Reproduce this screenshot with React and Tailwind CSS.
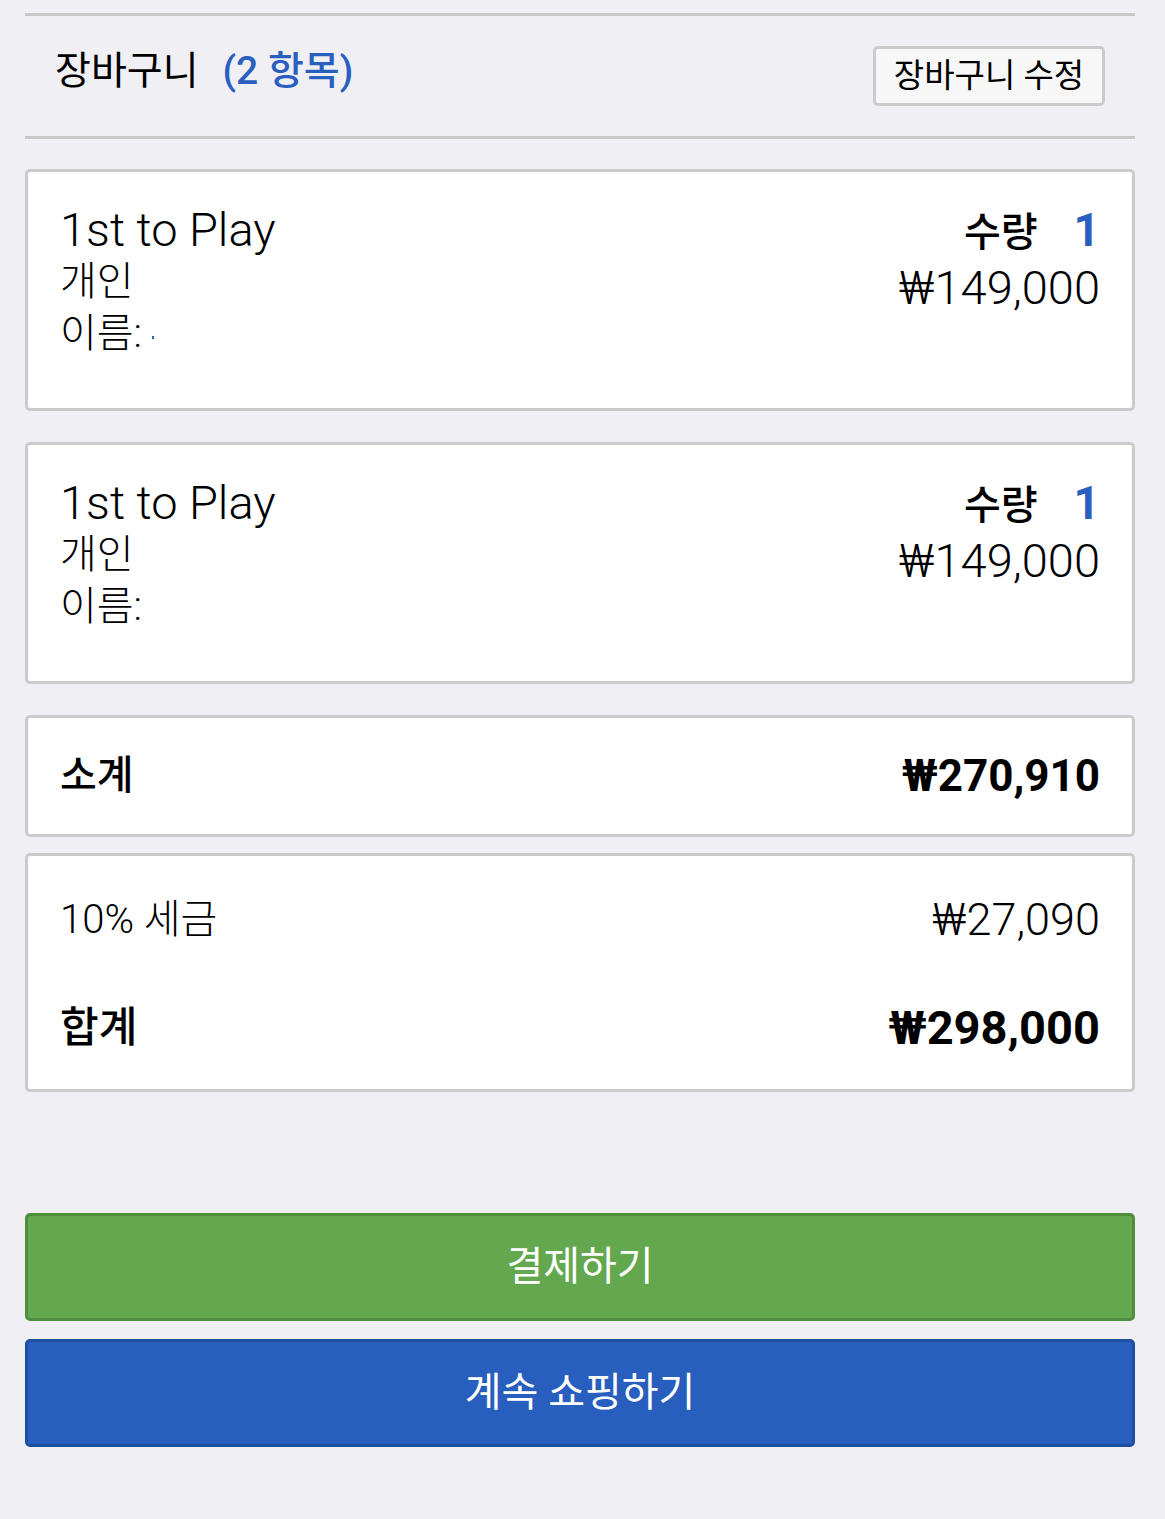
export default function App() {
  const font = { fontFamily: 'Roboto, "Noto Sans CJK KR", sans-serif' };
  const Item = ({ dot }) => (
    <div className="flex justify-between rounded-[5px] border-[3px] border-[#cbcbcb] bg-white pl-[32px] pr-[32px] pt-[32px] h-[242px]">
      <div className="flex flex-col">
        <div className="text-[47px] font-light leading-[52px] text-black">1st to Play</div>
        <div className="text-[40px] font-light leading-[52px] text-black">개인</div>
        <div className="flex items-center text-[40px] font-light leading-[52px] text-black">
          <span>이름:</span>
          {dot && <span className="ml-[10px] mt-[6px] inline-block h-[3px] w-[2px] bg-[#2a5fbf]"></span>}
        </div>
      </div>
      <div className="flex flex-col items-end">
        <div className="flex items-baseline leading-[52px]">
          <span className="text-[40px] font-medium text-black">수량</span>
          <span className="ml-[36px] text-[46px] font-bold text-[#2a5fbf]">1</span>
        </div>
        <div className="text-[47px] font-light leading-[58px] text-black">₩149,000</div>
      </div>
    </div>
  );
  return (
    <div className="min-h-[1519px] w-full bg-[#efeff4]" style={font}>
      <div className="pl-[25px] pr-[30px] pt-[13px]">
        <div className="border-t-[3px] border-[#c8c8c8]"></div>
        <div className="flex h-[120px] items-center justify-between pl-[30px] pr-[30px]">
          <div className="flex items-baseline -mt-[10px]">
            <span className="text-[39px] text-black">장바구니</span>
            <span className="ml-[24px] text-[39px] font-medium text-[#2a5fbf]">(2 항목)</span>
          </div>
          <div className="flex h-[60px] w-[232px] items-center justify-center rounded-[5px] border-[3px] border-[#cbcbcb] bg-[#f7f7f7] text-[33px] text-black">
            장바구니 수정
          </div>
        </div>
        <div className="border-t-[3px] border-[#c8c8c8]"></div>
        <div className="mt-[30px] flex flex-col">
          <Item dot />
          <div className="h-[31px]"></div>
          <Item />
          <div className="mt-[31px] flex h-[122px] items-center justify-between rounded-[5px] border-[3px] border-[#cbcbcb] bg-white px-[32px]">
            <span className="text-[40px] font-medium text-black">소계</span>
            <span className="text-[44px] font-bold text-black">₩270,910</span>
          </div>
          <div className="mt-[16px] flex h-[239px] flex-col justify-between rounded-[5px] border-[3px] border-[#cbcbcb] bg-white px-[32px] pt-[30px] pb-[26px]">
            <div className="flex items-center justify-between">
              <span className="text-[40px] font-light text-black">10% 세금</span>
              <span className="text-[45px] font-light text-black">₩27,090</span>
            </div>
            <div className="flex items-center justify-between">
              <span className="text-[42px] font-medium text-black">합계</span>
              <span className="text-[47px] font-bold text-black">₩298,000</span>
            </div>
          </div>
          <div className="mt-[121px] flex h-[108px] items-center justify-center rounded-[5px] border-[3px] border-[#4f8e3e] bg-[#63a84f] text-[40px] text-white">
            결제하기
          </div>
          <div className="mt-[18px] flex h-[108px] items-center justify-center rounded-[5px] border-[3px] border-[#1f4f9f] bg-[#285ebd] text-[40px] text-white">
            계속 쇼핑하기
          </div>
        </div>
      </div>
    </div>
  );
}
